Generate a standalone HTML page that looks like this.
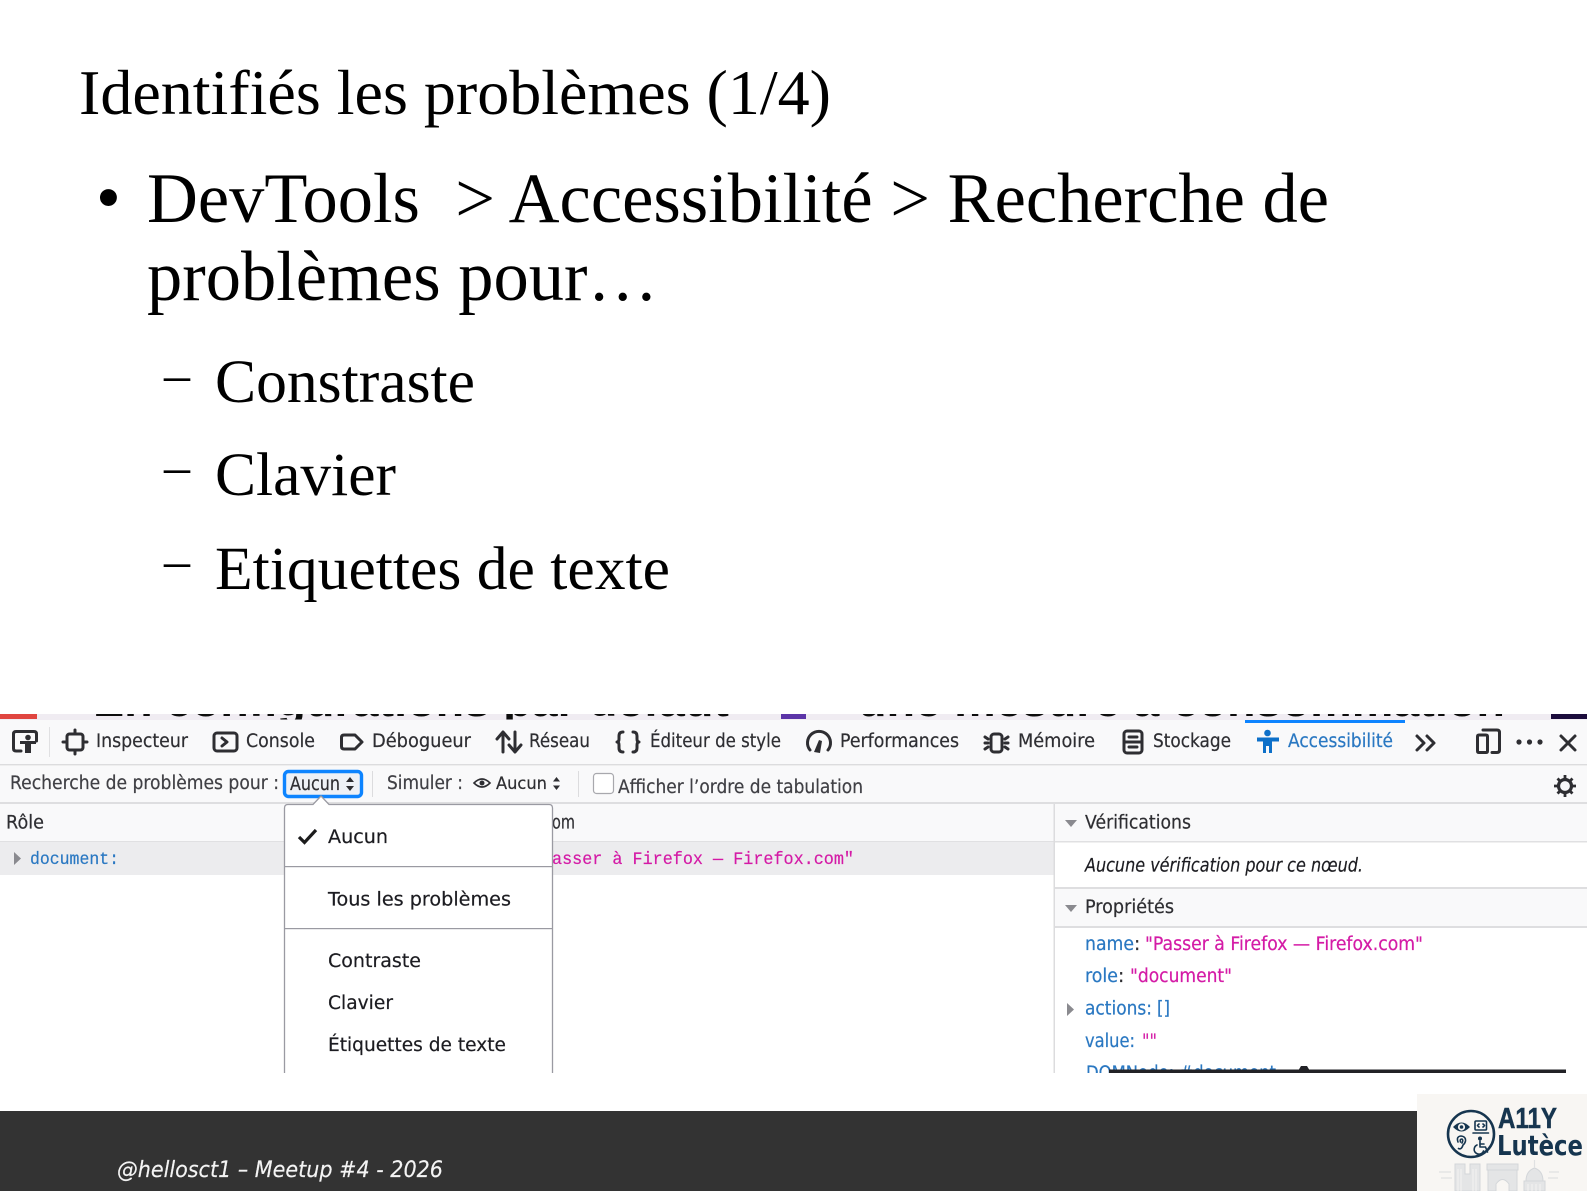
<!DOCTYPE html>
<html lang="fr"><head><meta charset="utf-8"><title>Identifiés les problèmes (1/4)</title>
<style>
html,body{margin:0;padding:0;background:#fff;width:1587px;height:1191px;overflow:hidden}
svg{display:block}
.s{font-family:"Liberation Serif",serif;fill:#000}
.d{font-family:"DejaVu Sans",sans-serif;font-size:18.5px;fill:#2f2f33;stroke:#2f2f33;stroke-width:.22}
.g{fill:#404045;stroke:#404045}
.k{fill:#1c1c20;stroke:#1c1c20;stroke-width:.2}
.m{font-family:"Liberation Mono",monospace;font-size:17.5px;stroke-width:.2}
.b{fill:#2a78c2;stroke:#2a78c2}.p{fill:#d41aa6;stroke:#d41aa6}
.i{fill:none;stroke:#2f2f33;stroke-width:3;stroke-linejoin:round;stroke-linecap:round}
.l{fill:none;stroke:#17364f;stroke-width:1.6;stroke-linejoin:round;stroke-linecap:round}
</style></head><body>
<svg width="1587" height="1191" viewBox="0 0 1587 1191" xmlns="http://www.w3.org/2000/svg">
<defs>
<filter id="bl" x="-2%" y="-2%" width="104%" height="104%"><feGaussianBlur stdDeviation="0.35"/></filter>
<clipPath id="st"><rect x="0" y="714" width="1587" height="5.5"/></clipPath>
<clipPath id="pic"><rect x="0" y="714" width="1587" height="359"/></clipPath>
</defs>
<rect width="1587" height="1191" fill="#fff"/>

<!-- slide -->
<text class="s" x="79" y="114" font-size="63.5" textLength="752" lengthAdjust="spacingAndGlyphs">Identifiés les problèmes (1/4)</text>
<text class="s" x="96" y="221" font-size="71">•</text>
<text class="s" x="147" y="222" font-size="71" textLength="1182" lengthAdjust="spacingAndGlyphs">DevTools&#160; &gt; Accessibilité &gt; Recherche de</text>
<text class="s" x="147" y="300" font-size="71" textLength="511" lengthAdjust="spacingAndGlyphs">problèmes pour…</text>
<text class="s" x="164" y="392" font-size="52">–</text>
<text class="s" x="215" y="402" font-size="61" textLength="260" lengthAdjust="spacingAndGlyphs">Constraste</text>
<text class="s" x="164" y="484" font-size="52">–</text>
<text class="s" x="215" y="495" font-size="61" textLength="181" lengthAdjust="spacingAndGlyphs">Clavier</text>
<text class="s" x="164" y="578" font-size="52">–</text>
<text class="s" x="215" y="589" font-size="61" textLength="455" lengthAdjust="spacingAndGlyphs">Etiquettes de texte</text>

<!-- devtools picture -->
<g filter="url(#bl)">
<g clip-path="url(#pic)">
<rect x="0" y="714" width="1587" height="359" fill="#fff"/>
<!-- cut strip -->
<rect x="0" y="714" width="1587" height="6" fill="#f0ecf2"/>
<rect x="0" y="714" width="37" height="5" fill="#e0453f"/>
<rect x="781" y="714" width="25" height="5" fill="#5b35a8"/>
<rect x="1551" y="714" width="36" height="5" fill="#1c0a3c"/>
<g clip-path="url(#st)">
<text x="93" y="716" font-family="Liberation Sans,sans-serif" font-weight="700" font-size="42" textLength="636" lengthAdjust="spacingAndGlyphs" fill="#111">En configurations par défaut</text>
<text x="858" y="716" font-family="Liberation Sans,sans-serif" font-weight="700" font-size="42" textLength="647" lengthAdjust="spacingAndGlyphs" fill="#111">une mesure à consommation</text>
</g>

<!-- tab bar -->
<rect x="0" y="720" width="1587" height="44" fill="#f9f9fa"/>
<rect x="0" y="764" width="1587" height="1.5" fill="#dcdcde"/>
<rect x="1245" y="720" width="160" height="3" fill="#0a84ff"/>
<rect x="49" y="727" width="1" height="30" fill="#e0e0e2"/>

<path class="i" d="M21 751H16Q13.500 751 13.500 748.500V734Q13.500 731.500 16 731.500H34Q36.500 731.500 36.500 734V741"/>
<circle cx="28" cy="737.500" r="2.800" fill="#2f2f33"/>
<path d="M20 741H36V744H31V753H25V744H20Z" fill="#2f2f33"/>

<rect class="i" x="67" y="734" width="16" height="16" rx="2.500"/>
<path class="i" d="M75 730V734M75 750V754M63 742H67M83 742H87" stroke-width="2.400"/>
<text class="d" x="96" y="747" textLength="92" lengthAdjust="spacingAndGlyphs">Inspecteur</text>

<rect class="i" x="214" y="733" width="23" height="18" rx="3"/>
<path class="i" d="M222 738L227 742L222 746" stroke-width="1.800"/>
<text class="d" x="246" y="747" textLength="69" lengthAdjust="spacingAndGlyphs">Console</text>

<path class="i" d="M344 735H355L362 742L355 749H344Q341.500 749 341.500 746.500V737.500Q341.500 735 344 735Z"/>
<text class="d" x="372" y="747" textLength="99" lengthAdjust="spacingAndGlyphs">Débogueur</text>

<path class="i" d="M503 752V733M497 739L503 732L509 739" stroke-width="2.600"/>
<path class="i" d="M515 732V751M509 745L515 752L521 745" stroke-width="2.600"/>
<text class="d" x="529" y="747" textLength="61" lengthAdjust="spacingAndGlyphs">Réseau</text>

<path class="i" d="M623 732Q619 732 619 736V739Q619 742 617 742Q619 742 619 745V748Q619 752 623 752"/>
<path class="i" d="M633 732Q637 732 637 736V739Q637 742 639 742Q637 742 637 745V748Q637 752 633 752"/>
<text class="d" x="650" y="747" textLength="131" lengthAdjust="spacingAndGlyphs">Éditeur de style</text>

<path class="i" d="M810 750A11.500 11.500 0 1 1 828 750"/>
<path d="M814 752L819 740L822 741L820 753Z" fill="#2f2f33"/>
<text class="d" x="840" y="747" textLength="119" lengthAdjust="spacingAndGlyphs">Performances</text>

<rect class="i" x="991" y="734" width="11" height="18" rx="3"/>
<path class="i" d="M985 737L988 739M985 743H988M985 749L988 747M1005 739L1008 737M1005 743H1008M1005 747L1008 749" stroke-width="1.400"/>
<text class="d" x="1018" y="747" textLength="77" lengthAdjust="spacingAndGlyphs">Mémoire</text>

<rect class="i" x="1124" y="731" width="18" height="22" rx="3"/>
<path class="i" d="M1124 742H1142M1129 737H1137M1129 747H1137" stroke-width="1.800"/>
<text class="d" x="1153" y="747" textLength="78" lengthAdjust="spacingAndGlyphs">Stockage</text>

<circle cx="1267.500" cy="733" r="3.300" fill="#0a6fc9"/>
<path d="M1257 737.500H1279V741.500H1272V753H1269V746H1266V753H1263V741.500H1257Z" fill="#0a6fc9"/>
<text class="d b" x="1288" y="747" textLength="105" lengthAdjust="spacingAndGlyphs">Accessibilité</text>

<path class="i" d="M1417 736L1424 743L1417 750M1427 736L1434 743L1427 750" stroke-width="3.600"/>

<path class="i" d="M1486 735H1479Q1477.500 735 1477.500 736.500V751Q1477.500 752.500 1479 752.500H1486Q1487.500 752.500 1487.500 751V736.500Q1487.500 735 1486 735" stroke-width="2.400"/>
<path class="i" d="M1483 730H1497Q1499.500 730 1499.500 732.500V750Q1499.500 752.500 1497 752.500H1492" stroke-width="2.600"/>
<circle cx="1519" cy="742" r="2.600" fill="#2f2f33"/><circle cx="1529.500" cy="742" r="2.600" fill="#2f2f33"/><circle cx="1540" cy="742" r="2.600" fill="#2f2f33"/>
<path class="i" d="M1561 736L1575 750M1575 736L1561 750" stroke-width="2.400"/>

<!-- toolbar -->
<rect x="0" y="766" width="1587" height="36" fill="#f9f9fa"/>
<rect x="0" y="802" width="1587" height="2" fill="#dedee0"/>
<text class="d g" x="10" y="789" textLength="269" lengthAdjust="spacingAndGlyphs">Recherche de problèmes pour :</text>
<rect x="284.500" y="771.500" width="77" height="25" rx="4" fill="#eef1f6" stroke="#0a84ff" stroke-width="3.400"/>
<text class="d" x="290" y="790" textLength="50" lengthAdjust="spacingAndGlyphs">Aucun</text>
<path d="M350 777L354 782H346ZM350 791L354 786H346Z" fill="#2f2f33"/>
<rect x="372" y="771" width="1" height="26" fill="#dcdcde"/>
<text class="d g" x="387" y="789" textLength="76" lengthAdjust="spacingAndGlyphs">Simuler :</text>
<path d="M474 783Q482 775 490 783Q482 791 474 783Z" fill="none" stroke="#2f2f33" stroke-width="1.600"/>
<circle cx="482" cy="783" r="2.500" fill="#2f2f33"/>
<text class="d" x="496" y="789" textLength="51" lengthAdjust="spacingAndGlyphs" style="font-size:17px">Aucun</text>
<path d="M556.500 777L560 781.500H553ZM556.500 790L560 785.500H553Z" fill="#2f2f33"/>
<rect x="578" y="771" width="1" height="26" fill="#dcdcde"/>
<rect x="593.500" y="773.500" width="20" height="20" rx="3" fill="#fff" stroke="#a8a8ad" stroke-width="1.200"/>
<text class="d g" x="618" y="793" textLength="245" lengthAdjust="spacingAndGlyphs">Afficher l’ordre de tabulation</text>
<circle cx="1565" cy="786" r="6.500" fill="none" stroke="#2f2f33" stroke-width="3.200"/>
<path d="M1565 775V797M1554 786H1576M1557.500 778.500L1572.500 793.500M1572.500 778.500L1557.500 793.500" stroke="#2f2f33" stroke-width="2.800" stroke-dasharray="3.500 15 3.500" fill="none"/>

<!-- table -->
<rect x="0" y="804" width="1054" height="37" fill="#f9f9fa"/>
<rect x="0" y="841" width="1054" height="1.500" fill="#e0e0e2"/>
<text class="d" x="6" y="828.500" textLength="38" lengthAdjust="spacingAndGlyphs">Rôle</text>
<text class="d" x="552" y="828.500" textLength="23" lengthAdjust="spacingAndGlyphs">om</text>
<rect x="0" y="842" width="1054" height="33" fill="#ececee"/>
<path d="M14 852L21 858.500L14 865Z" fill="#8a8a8f"/>
<text class="m b" x="30" y="864" textLength="89" lengthAdjust="spacingAndGlyphs">document:</text>
<text class="m p" x="552" y="864" textLength="302" lengthAdjust="spacingAndGlyphs">asser à Firefox — Firefox.com"</text>

<!-- side panel -->
<rect x="1054" y="804" width="533" height="269" fill="#fff"/>
<rect x="1053.500" y="804" width="1.500" height="269" fill="#dcdcde"/>
<rect x="1055" y="804" width="532" height="37" fill="#f9f9fa"/>
<rect x="1055" y="841" width="532" height="1.500" fill="#e0e0e2"/>
<path d="M1065 820H1077L1071 827Z" fill="#8a8a8f"/>
<text class="d" x="1085" y="828.500" textLength="106" lengthAdjust="spacingAndGlyphs">Vérifications</text>
<text class="d k" x="1085" y="871.500" textLength="278" lengthAdjust="spacingAndGlyphs" font-style="italic">Aucune vérification pour ce nœud.</text>
<rect x="1055" y="887" width="532" height="2" fill="#dedee0"/>
<rect x="1055" y="889" width="532" height="37" fill="#f9f9fa"/>
<rect x="1055" y="926" width="532" height="2" fill="#dedee0"/>
<path d="M1065 905H1077L1071 912Z" fill="#8a8a8f"/>
<text class="d" x="1085" y="913" textLength="89" lengthAdjust="spacingAndGlyphs">Propriétés</text>

<text class="d b" x="1085" y="950" textLength="49" lengthAdjust="spacingAndGlyphs">name</text>
<text class="d" x="1134" y="950">:</text>
<text class="d p" x="1145" y="950" textLength="278" lengthAdjust="spacingAndGlyphs">"Passer à Firefox — Firefox.com"</text>
<text class="d b" x="1085" y="982" textLength="33" lengthAdjust="spacingAndGlyphs">role</text>
<text class="d" x="1118" y="982">:</text>
<text class="d p" x="1130" y="982" textLength="102" lengthAdjust="spacingAndGlyphs">"document"</text>
<path d="M1067 1003L1074 1009.500L1067 1016Z" fill="#8a8a8f"/>
<text class="d b" x="1085" y="1014.500" textLength="67" lengthAdjust="spacingAndGlyphs">actions:</text>
<text class="d b" x="1157" y="1014.500" textLength="13" lengthAdjust="spacingAndGlyphs">[]</text>
<text class="d b" x="1085" y="1047" textLength="50" lengthAdjust="spacingAndGlyphs">value:</text>
<text class="d p" x="1142" y="1047" textLength="15" lengthAdjust="spacingAndGlyphs">""</text>
<text class="d b" x="1086" y="1079" textLength="190" lengthAdjust="spacingAndGlyphs">DOMNode: #document</text>
<rect x="1109" y="1069.500" width="457" height="3.500" fill="#222225"/>
<path d="M1298 1071L1301 1066H1307L1310 1071Z" fill="#222225"/>

<!-- popup -->
<path d="M284.500 1085V808Q284.500 804.500 288 804.500H313L321 796L329 804.500H549Q552.500 804.500 552.500 808V1085Z" fill="#fff" stroke="#9a9aa2" stroke-width="1.300"/>
<path d="M299 837L304.500 842.500L316 830" fill="none" stroke="#1a1a1e" stroke-width="3.200"/>
<text class="d k" x="328" y="843" textLength="60" lengthAdjust="spacingAndGlyphs">Aucun</text>
<rect x="285" y="866" width="267" height="1.200" fill="#9a9aa2"/>
<text class="d k" x="328" y="905.500" textLength="183" lengthAdjust="spacingAndGlyphs">Tous les problèmes</text>
<rect x="285" y="928" width="267" height="1.200" fill="#9a9aa2"/>
<text class="d k" x="328" y="967" textLength="93" lengthAdjust="spacingAndGlyphs">Contraste</text>
<text class="d k" x="328" y="1009" textLength="65" lengthAdjust="spacingAndGlyphs">Clavier</text>
<text class="d k" x="328" y="1051" textLength="178" lengthAdjust="spacingAndGlyphs">Étiquettes de texte</text>
</g>
</g>

<!-- footer -->
<rect x="0" y="1111" width="1587" height="80" fill="#333333"/>
<text x="117" y="1177" font-family="DejaVu Sans,sans-serif" font-style="italic" font-size="22" fill="#f4f4f4" stroke="#f4f4f4" stroke-width=".15" textLength="326" lengthAdjust="spacingAndGlyphs">@hellosct1 – Meetup #4 - 2026</text>

<!-- logo -->
<rect x="1417" y="1094" width="170" height="97" fill="#f8f6f3"/>
<g filter="url(#bl)">
<circle cx="1471" cy="1134" r="23" fill="none" stroke="#17364f" stroke-width="2.600"/>
<!-- eye -->
<path d="M1453 1127Q1461.500 1118 1470 1127Q1461.500 1136 1453 1127Z" fill="#17364f"/>
<circle cx="1461.500" cy="1127" r="3.600" fill="#f8f6f3"/>
<circle cx="1461.500" cy="1127" r="1.800" fill="#17364f"/>
<!-- laptop -->
<rect x="1475" y="1121" width="11.500" height="9" rx="1" class="l"/>
<path d="M1473 1133H1488.500" class="l" stroke-width="2"/>
<path d="M1479 1124L1477.500 1125.500L1479 1127M1483 1124L1484.500 1125.500L1483 1127" class="l" stroke-width=".8"/>
<!-- ear -->
<path d="M1458 1142Q1456 1136.500 1461 1136Q1466 1136.500 1465.500 1141Q1465 1143.500 1463 1145Q1461.500 1150 1458.500 1148.500M1460.500 1142Q1459.500 1139 1462 1139Q1463.500 1140 1462 1143" class="l" stroke-width="1.500"/>
<!-- wheelchair -->
<circle cx="1480" cy="1138.500" r="2" fill="#17364f"/>
<path d="M1480 1141V1147H1485.500L1487.500 1152" class="l" stroke-width="2"/>
<path d="M1480 1144H1484" class="l"/>
<path d="M1477 1145A4.800 4.800 0 1 0 1483.500 1151" class="l"/>

<text x="1498" y="1128" font-family="Liberation Sans,sans-serif" font-weight="700" font-size="29" fill="#17364f" stroke="#17364f" stroke-width=".5" textLength="59" lengthAdjust="spacingAndGlyphs">A11Y</text>
<text x="1497" y="1155" font-family="DejaVu Sans,sans-serif" font-weight="700" font-size="28" fill="#17364f" textLength="86" lengthAdjust="spacingAndGlyphs">Lutèce</text>
<!-- monuments -->
<g fill="#e4e5e6" stroke="#d3d6d9" stroke-width="1">
<path d="M1455 1191V1164H1465V1174H1470V1164H1480V1191Z"/>
<path d="M1488 1191V1170H1517V1191H1509V1184Q1502.500 1175 1496 1184V1191Z"/>
<rect x="1487" y="1164" width="31" height="6"/>
<path d="M1524 1191V1181H1545V1191Z"/>
<path d="M1526 1181Q1526 1171 1534.500 1168Q1543 1171 1543 1181Z"/>
</g>
<path d="M1534.500 1168V1160M1439 1172H1451M1441 1178H1452M1549 1172H1559M1548 1178H1558" fill="none" stroke="#e0e1e2" stroke-width="1.200"/>
<path d="M1458 1169V1191M1461 1169V1191M1473 1169V1191M1476 1169V1191M1528 1184V1191M1532 1184V1191M1536 1184V1191M1540 1184V1191" fill="none" stroke="#f4f3f1" stroke-width="1"/>
</g>
</svg>
</body></html>
